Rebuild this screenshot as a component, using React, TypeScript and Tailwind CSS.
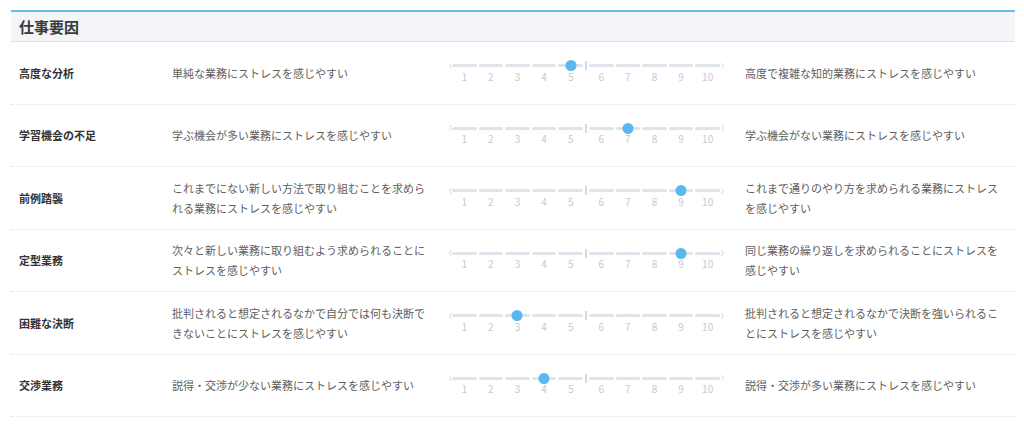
import React from "react";

type Row = { label: string; left: string; right: string; value: number };

const rows: Row[] = [
  { label: "高度な分析", left: "単純な業務にストレスを感じやすい", right: "高度で複雑な知的業務にストレスを感じやすい", value: 5 },
  { label: "学習機会の不足", left: "学ぶ機会が多い業務にストレスを感じやすい", right: "学ぶ機会がない業務にストレスを感じやすい", value: 7 },
  { label: "前例踏襲", left: "これまでにない新しい方法で取り組むことを求められる業務にストレスを感じやすい", right: "これまで通りのやり方を求められる業務にストレスを感じやすい", value: 9 },
  { label: "定型業務", left: "次々と新しい業務に取り組むよう求められることにストレスを感じやすい", right: "同じ業務の繰り返しを求められることにストレスを感じやすい", value: 9 },
  { label: "困難な決断", left: "批判されると想定されるなかで自分では何も決断できないことにストレスを感じやすい", right: "批判されると想定されるなかで決断を強いられることにストレスを感じやすい", value: 3 },
  { label: "交渉業務", left: "説得・交渉が少ない業務にストレスを感じやすい", right: "説得・交渉が多い業務にストレスを感じやすい", value: 4 },
];

function Cells({ start, value }: { start: number; value: number }) {
  return (
    <>
      {[0, 1, 2, 3, 4].map((i) => {
        const n = start + i;
        return (
          <div key={n} className="relative flex w-[26.6px] flex-col items-center">
            <div className="flex h-[10px] w-full items-center px-[1px]">
              <div className="h-[3px] w-full rounded-full bg-[#dfe4ea]" />
            </div>
            {value === n && (
              <div className="absolute left-1/2 top-[-0.5px] h-[11px] w-[11px] -translate-x-1/2 rounded-full bg-[#59b9ee]" />
            )}
            <span className="text-[10px] leading-[12px] text-[#c3cad3]">{n}</span>
          </div>
        );
      })}
    </>
  );
}

function Scale({ value }: { value: number }) {
  return (
    <div className="flex items-start pb-[2px]">
      <div className="flex h-[10px] w-[2px] items-center">
        <svg width="3" height="8" viewBox="0 0 3 8" className="overflow-visible">
          <path d="M2.5 1 L0.5 4 L2.5 7" fill="none" stroke="#d6dce3" strokeWidth="1" />
        </svg>
      </div>
      <Cells start={1} value={value} />
      <div className="flex h-[10px] w-[4px] items-center justify-center">
        <div className="h-[9px] w-[2px] bg-[#d3d9e0]" />
      </div>
      <Cells start={6} value={value} />
      <div className="flex h-[10px] w-[4px] items-center">
        <svg width="3" height="8" viewBox="0 0 3 8" className="overflow-visible">
          <path d="M0.5 1 L2.5 4 L0.5 7" fill="none" stroke="#d6dce3" strokeWidth="1" />
        </svg>
      </div>
    </div>
  );
}

export default function App() {
  return (
    <div
      className="min-h-[426px] bg-white pl-[11px] pr-[9px] pt-[10px]"
      style={{ fontFamily: '"Noto Sans CJK JP", "Noto Sans", sans-serif' }}
    >
      <div className="w-[1004px]">
        <div className="flex h-[32px] items-center border-t-2 border-b border-t-[#62bff0] border-b-[#dde3ea] bg-[#f3f5f8] px-2">
          <h2 className="text-[15px] font-bold leading-none text-[#3a3a3a]">仕事要因</h2>
        </div>
        {rows.map((r) => (
          <div
            key={r.label}
            className="grid h-[62.5px] grid-cols-[153px_277px_296px_1fr] items-center border-b border-dotted border-[#dbe1e8] px-2"
          >
            <div className="text-[11px] font-bold leading-[20px] text-[#333]">{r.label}</div>
            <div className="w-[258px] text-[11px] leading-[20px] text-[#5e5e5e]">{r.left}</div>
            <Scale value={r.value} />
            <div className="w-[258px] text-[11px] leading-[20px] text-[#5e5e5e]">{r.right}</div>
          </div>
        ))}
      </div>
    </div>
  );
}
